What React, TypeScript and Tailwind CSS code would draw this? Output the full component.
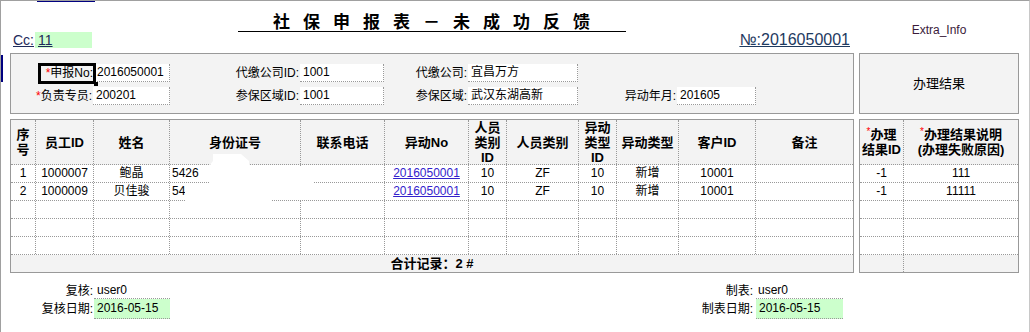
import type { ReactNode } from "react"

const FONT = "font-[family-name:'Liberation_Sans','Noto_Sans_CJK_SC',sans-serif]"

const Req = () => <span className="text-[#ff0000]">*</span>
const SmallReq = () => <span className="align-top text-[10px] leading-[10px] font-normal text-[#ff0000]">*</span>

type Col = { w: string; head: ReactNode; align?: string }

const LEFT: Col[] = [
  { w: "w-[25px]", head: <>序<br />号</> },
  { w: "w-[58px]", head: "员工ID" },
  { w: "w-[76px]", head: "姓名" },
  { w: "w-[131px]", head: "身份证号", align: "justify-start pl-[2px]" },
  { w: "w-[84px]", head: "联系电话" },
  { w: "w-[84px]", head: "异动No" },
  { w: "w-[38px]", head: <>人员<br />类别<br />ID</> },
  { w: "w-[72px]", head: "人员类别" },
  { w: "w-[38px]", head: <>异动<br />类型<br />ID</> },
  { w: "w-[62px]", head: "异动类型" },
  { w: "w-[77px]", head: "客户ID" },
  { w: "w-[97px]", head: "备注" },
]

const RIGHT: Col[] = [
  { w: "w-[44px]", head: <><SmallReq />办理<br />结果ID</> },
  { w: "w-[114px]", head: <><SmallReq />办理结果说明<br />(办理失败原因)</> },
]

const link = (t: string) => <a className="text-[#3322cc] underline">{t}</a>

const leftRows: ReactNode[][] = [
  ["1", "1000007", "鲍晶", "5426", "", link("2016050001"), "10", "ZF", "10", "新增", "10001", ""],
  ["2", "1000009", "贝佳骏", "542", "", link("2016050001"), "10", "ZF", "10", "新增", "10001", ""],
  Array(12).fill(""),
  Array(12).fill(""),
  Array(12).fill(""),
]

const rightRows: ReactNode[][] = [["-1", "111"], ["-1", "11111"], ["", ""], ["", ""], ["", ""]]

const dot = "border-dotted border-[#999]"

function HeadRow({ cols }: { cols: Col[] }) {
  return (
    <div className={`flex h-[45px] border-b ${dot} bg-[#f3f3f3]`}>
      {cols.map((c, i) => (
        <div
          key={i}
          className={`${c.w} flex shrink-0 items-center justify-center text-center text-[13px] font-bold leading-[15px] whitespace-nowrap ${
            i < cols.length - 1 ? `border-r ${dot}` : ""
          }`}
        >
          <div>{c.head}</div>
        </div>
      ))}
    </div>
  )
}

function Body({ cols, rows }: { cols: Col[]; rows: ReactNode[][] }) {
  return (
    <>
      {rows.map((r, ri) => (
        <div key={ri} className={`flex h-[18px] border-b ${dot} bg-white`}>
          {cols.map((c, i) => (
            <div
              key={i}
              className={`${c.w} flex shrink-0 items-center whitespace-nowrap text-[12px] leading-[17px] ${
                c.align ?? "justify-center"
              } ${i < cols.length - 1 ? `border-r ${dot}` : ""}`}
            >
              {r[i]}
            </div>
          ))}
        </div>
      ))}
    </>
  )
}

function Field({ label, value, req }: { label: string; value?: string; req?: boolean }) {
  return (
    <>
      <div className="flex items-center justify-end whitespace-nowrap pr-[1px]">
        {req && <Req />}
        {label}
      </div>
      {value !== undefined ? (
        <div className={`border-r border-b ${dot} bg-white pl-[3px] leading-[17px]`}>{value}</div>
      ) : (
        <div />
      )}
    </>
  )
}

export default function App() {
  return (
    <div
      className={`${FONT} relative h-[332px] w-[1030px] overflow-hidden border-t border-r border-l border-t-[#a0a0a0] border-r-[#c8c8c8] border-l-[#a0a0a0] bg-white text-black`}
    >
      <div className="absolute top-0 left-[36px] h-px w-[58px] bg-[#000080]" />
      <div className="absolute top-[54px] left-0 h-[27px] w-[2px] bg-[#000080]" />

      <div className="flex gap-[5px] pl-[9px]">
        {/* main column */}
        <div className="w-[844px]">
          <div className="h-[52px]">
            <div className="flex h-[31px] items-end justify-center">
              <span className="border-b border-black pr-[23px] pl-[35px] text-[17px] leading-[20px] font-bold tracking-[13px] [font-family:'Noto_Sans_CJK_SC',sans-serif]">
                社保申报表－未成功反馈
              </span>
            </div>
            <div className="flex h-[16px] items-start justify-between pr-[4px] pl-[3px]">
              <div className="flex items-start">
                <span className="text-[14px] leading-[16px] text-[#1e2a5a] underline">Cc:</span>
                <span className="ml-[1px] h-[16px] w-[57px] bg-[#ccffcc] pl-[3px] text-[14px] leading-[16px] text-[#1e2a5a]">
                  <span className="underline">11</span>
                </span>
              </div>
              <span className="text-[16px] leading-[16px] text-[#1e3a5f] underline">№:2016050001</span>
            </div>
          </div>

          <div className="h-[61px] border border-[#999] bg-[#f3f3f3] pt-[10px] text-[12px]">
            <div className="grid grid-cols-[82px_77px_130px_84px_84px_110px_99px_79px] grid-rows-[18px_18px] gap-y-[5px]">
              <div className="flex items-center justify-end">
                <span className="relative -mr-[3px] flex h-[21px] items-center border-[3px] border-black pl-[5px] leading-[15px]">
                  <Req />
                  申报No:
                  <span className="absolute -right-[5px] -bottom-[5px] h-[4px] w-[4px] bg-black" />
                </span>
              </div>
              <div className={`ml-[2px] border-r border-b ${dot} bg-white pl-[2px] leading-[17px]`}>2016050001</div>
              <Field label="代缴公司ID:" value="1001" />
              <Field label="代缴公司:" value="宜昌万方" />
              <Field label="" />
              <Field label="负责专员:" value="200201" req />
              <Field label="参保区域ID:" value="1001" />
              <Field label="参保区域:" value="武汉东湖高新" />
              <Field label="异动年月:" value="201605" />
            </div>
          </div>

          <div className="relative mt-[5px] h-[154px] border border-[#999] bg-white">
            <HeadRow cols={LEFT} />
            <Body cols={LEFT} rows={leftRows} />
            <div className="flex h-[17px] items-center justify-center bg-[#f3f3f3] text-[13px] font-bold">
              合计记录：2 #
            </div>
            <svg className="pointer-events-none absolute top-0 left-0" width="844" height="154">
              <polygon
                fill="#fff"
                points="202,34 230,34 238,41 238,46 302,46 302,80 260,80 260,82 174,82 174,64 198,64 198,46 202,41"
              />
            </svg>
          </div>

          <div className="mt-[9px] flex justify-between pr-[11px] text-[12px]">
            <div className="grid grid-cols-[84px_76px] grid-rows-[17px_20px]">
              <div className="flex items-center justify-end pr-[1px]">复核:</div>
              <div className={`border-b ${dot} pl-[3px] leading-[16px]`}>user0</div>
              <div className="flex items-center justify-end pr-[1px]">复核日期:</div>
              <div className={`border-b ${dot} bg-[#ccffcc] pl-[3px] leading-[19px]`}>2016-05-15</div>
            </div>
            <div className="grid grid-cols-[90px_87px] grid-rows-[17px_20px]">
              <div className="flex items-center justify-end pr-[3px]">制表:</div>
              <div className={`border-b ${dot} pl-[2px] leading-[16px]`}>user0</div>
              <div className="flex items-center justify-end pr-[3px]">制表日期:</div>
              <div className={`border-b ${dot} bg-[#ccffcc] pl-[3px] leading-[19px]`}>2016-05-15</div>
            </div>
          </div>
        </div>

        {/* result column */}
        <div className="w-[160px]">
          <div className="h-[52px] pt-[22px] text-center text-[12px] leading-[14px] text-[#3a1a3a]">Extra_Info</div>
          <div className="flex h-[61px] items-center justify-center border border-[#999] bg-[#f3f3f3] text-[13px]">
            办理结果
          </div>
          <div className="mt-[5px] h-[154px] border border-[#999] bg-white">
            <HeadRow cols={RIGHT} />
            <Body cols={RIGHT} rows={rightRows} />
            <div className="flex h-[17px] bg-[#f3f3f3]">
              <div className={`w-[44px] border-r ${dot}`} />
              <div className="w-[114px]" />
            </div>
          </div>
        </div>
      </div>
    </div>
  )
}
